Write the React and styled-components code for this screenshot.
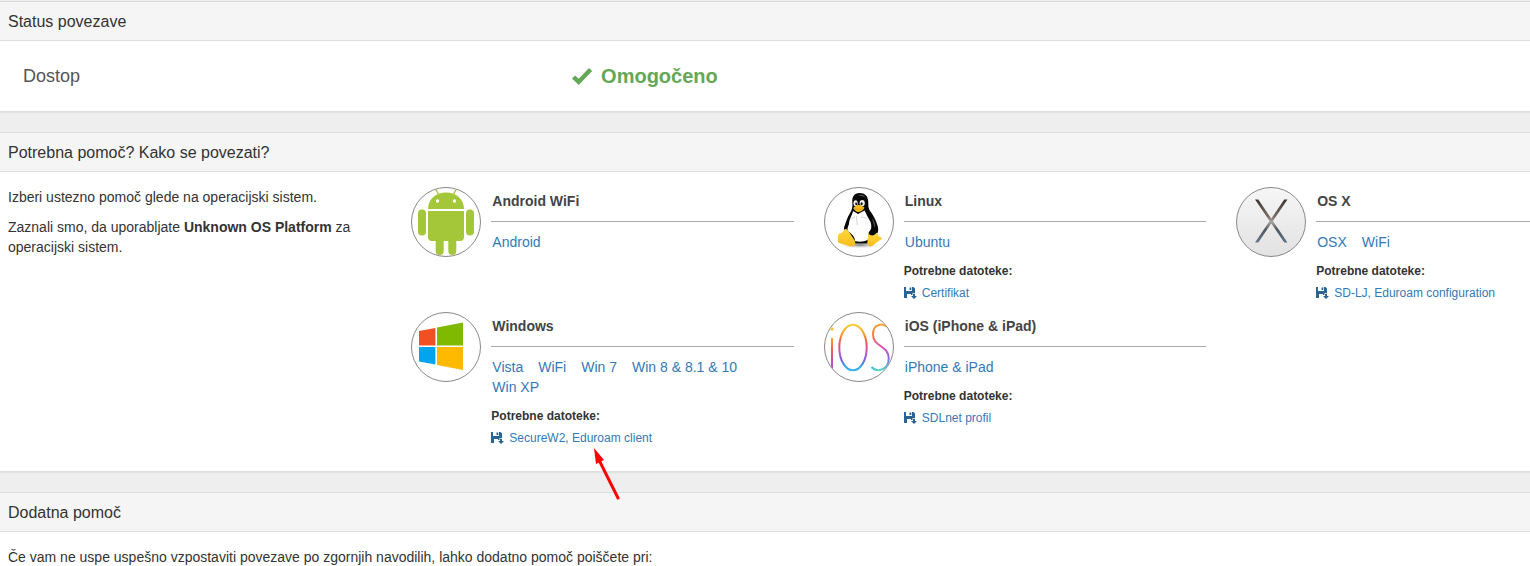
import React from "react";
import styled, { createGlobalStyle } from "styled-components";

const GlobalStyle = createGlobalStyle`
  * { box-sizing: border-box; }
  body {
    margin: 0;
    background: #eeeeee;
    color: #333333;
    font: 14px/20px "Liberation Sans", Arial, sans-serif;
  }
`;

const Page = styled.main`
  display: flex;
  flex-direction: column;
  gap: 20px;
  padding-top: 1px;
`;

const Panel = styled.section`
  background: #ffffff;
  border-top: 1px solid #dddddd;
  border-bottom: 1px solid #dddddd;
  box-shadow: 0 1px 1px rgba(0, 0, 0, 0.05);
`;

const PanelTitle = styled.h2`
  margin: 0;
  padding: 10px 8px 8px;
  background: #f5f5f5;
  border-bottom: 1px solid #dddddd;
  font-size: 16px;
  font-weight: 400;
  line-height: 20px;
`;

const StatusRow = styled.div`
  display: grid;
  grid-template-columns: 37% 1fr;
  align-items: center;
  padding: 25px 23px;
  color: #555555;
  font-size: 18px;
`;

const StatusValue = styled.strong`
  display: flex;
  align-items: center;
  gap: 9px;
  color: #64a857;
  font-size: 20px;
`;

const HelpBody = styled.div`
  display: flex;
  padding: 15px 0 14px 8px;
  overflow-x: clip;
`;

const Intro = styled.div`
  flex: 0 0 26.5%;
  padding-right: 40px;
`;

const Paragraph = styled.p`
  margin: 0 0 10px;
`;

const SystemGrid = styled.div`
  flex: 1;
  min-width: 0;
  display: grid;
  grid-template-columns: repeat(3, 36.87%);
`;

const SystemItem = styled.article`
  display: flex;
  gap: 10px;
  padding: 0 30px 9px 0;
`;

const Badge = styled.div`
  flex: none;
  width: 70px;
  height: 70px;
  border: 1px solid #888888;
  border-radius: 50%;
  overflow: hidden;
  background: ${(p) => p.$fill || "#ffffff"};

  svg {
    display: block;
    margin: -1px;
  }
`;

const SystemInfo = styled.div`
  flex: 1;
  min-width: 0;
`;

const SystemName = styled.h3`
  margin: 0 0 10px;
  padding: 4px 1px 10px;
  border-bottom: 1px solid #aaaaaa;
  color: #444444;
  font-size: 14px;
  line-height: 20px;
`;

const GuideLinks = styled.nav`
  display: flex;
  flex-wrap: wrap;
  column-gap: 15px;
  padding: 0 1px;
`;

const TextLink = styled.a`
  color: #337ab7;
  text-decoration: none;
  &:hover { text-decoration: underline; }
`;

const FilesTitle = styled.h4`
  margin: 9px 0 2px;
  font-size: 12px;
  line-height: 20px;
`;

const FileRow = styled.div`
  position: relative;
  font-size: 12px;
`;

const FileLink = styled(TextLink)`
  display: flex;
  align-items: center;
  gap: 5px;
`;

const Pointer = styled.svg`
  position: absolute;
  top: 19px;
  left: 101px;
  z-index: 1;
  pointer-events: none;
`;

const TextBody = styled.div`
  padding: 15px 8px;
`;

const CheckIcon = () => (
  <svg width="20" height="17" viewBox="0 0 20 17" aria-hidden="true">
    <path d="M0 10.5 3 7.5 6.7 10.8 17 0 20.2 3 6.7 17Z" fill="currentColor" />
  </svg>
);

const SaveIcon = () => (
  <svg width="13" height="12" viewBox="0 0 13 12" aria-hidden="true">
    <path
      fill="#2a6496"
      fillRule="evenodd"
      d="M0 0H2V4H8V0H9.5L11 1.5V6H8.5V8H7V7H3V11H0ZM5.5 .5H7.3V3H5.5ZM9 6.8H11V9H13L10 12 7 9H9Z"
    />
  </svg>
);

const AndroidArt = () => (
  <svg width="70" height="70" viewBox="0 0 70 70" aria-hidden="true">
    <g fill="#a4c639">
      <path d="M17 22C17 12 25 5.5 35 5.5S53 12 53 22Z" />
      <path d="M17 24H53V50Q53 54 49 54H21Q17 54 17 50Z" />
      <rect x="7" y="22.5" width="8" height="26" rx="4" />
      <rect x="55" y="22.5" width="8" height="26" rx="4" />
      <rect x="24.7" y="48" width="8" height="20" rx="4" />
      <rect x="37.3" y="48" width="8" height="20" rx="4" />
    </g>
    <path d="M24.5 2 28 8M45.5 2 42 8" stroke="#a4c639" strokeWidth="1.4" strokeLinecap="round" />
    <circle cx="26.5" cy="14" r="1.7" fill="#fff" />
    <circle cx="43.5" cy="14" r="1.7" fill="#fff" />
  </svg>
);

const LinuxArt = () => (
  <svg width="70" height="70" viewBox="0 0 70 70" aria-hidden="true">
    <defs>
      <radialGradient id="tuxShade">
        <stop offset="0" stopColor="#777" />
        <stop offset="1" stopColor="#fff" stopOpacity="0" />
      </radialGradient>
      <linearGradient id="tuxFoot" x1="0" y1="0" x2="0" y2="1">
        <stop offset="0" stopColor="#ffd83c" />
        <stop offset="1" stopColor="#f6bd1c" />
      </linearGradient>
    </defs>
    <ellipse cx="36" cy="58" rx="23" ry="4" fill="url(#tuxShade)" />
    <path
      fill="#080808"
      d="M35.5 6C30 6 28 10 28.3 15 28.6 20 28.5 22 25.5 27 23 31 22.5 34 20.5 39 19 43 21 48 25 52L31 56.5H44L49 51C54 48 55.5 43 53 37 51.5 32 49 28 46.5 24.5 43.8 21 44.6 18 44.2 14 43.8 9 41 6 35.5 6Z"
    />
    <path fill="#5a5a5a" d="M34 8C37 7.3 40 8 41 10 38 9 36 9 34 8ZM48 31C50.5 34 51.5 38 51 41 49.5 37 49 34 48 31Z" />
    <path
      fill="#fff"
      d="M29 24C28.5 28 25 32 25 37 23.5 41 22.5 43 25 45 28 47 31 50 31 54 35 55.3 40 55 44.2 52.5L44.8 45C48 43 48 37 45.5 33 43 29 42 26 40.5 23.5L34 27Z"
    />
    <path d="M32.5 29Q32.5 34 33.5 38M27 32Q29 30 31 30M37 30Q41 30 43 32" fill="none" stroke="#cfcfcf" strokeWidth=".9" />
    <ellipse cx="31.6" cy="16.2" rx="2.1" ry="2.9" fill="#eee" />
    <ellipse cx="38.2" cy="16.2" rx="2.6" ry="3.1" fill="#eee" />
    <ellipse cx="32.2" cy="16.8" rx="1" ry="1.4" fill="#111" />
    <ellipse cx="37.6" cy="16.8" rx="1.1" ry="1.5" fill="#111" />
    <path fill="#f5bd16" d="M29.2 21.2C30.5 19.5 32.5 18 34.7 18 37 18 38.5 19.7 40.4 20.4 40.4 22.6 36.5 24.8 34.2 25 32 25 30.5 23 29.2 21.2Z" />
    <path d="M30.5 21.7Q34.5 23.7 39.3 21.2" fill="none" stroke="#d08c12" strokeWidth=".6" />
    <path
      fill="url(#tuxFoot)"
      d="M14.7 46.4C17.5 46.5 18.7 45.5 20 43 21.5 40.8 24 43 25.7 46L31 54C32.2 57 29.5 60 26.7 59.5 23 58.3 19 57 15 56 12.8 55 14.6 52.6 14 50.3Z"
    />
    <path
      fill="url(#tuxFoot)"
      d="M44.5 46.5C46.5 49 50 49.3 52.5 45.7 53.5 46 53.6 49 55.5 49.6 57 50.3 58 51 57.7 52 54 54 51 57 48 59 45 60.2 43 58 43.3 55Z"
    />
  </svg>
);

const MacArt = () => (
  <svg width="70" height="70" viewBox="0 0 70 70" aria-hidden="true">
    <defs>
      <linearGradient id="macStroke" gradientUnits="userSpaceOnUse" x1="0" y1="12" x2="0" y2="56">
        <stop offset="0" stopColor="#3b3432" />
        <stop offset=".4" stopColor="#786b65" />
        <stop offset=".52" stopColor="#aaa39f" />
        <stop offset=".7" stopColor="#50565e" />
        <stop offset="1" stopColor="#66788c" />
      </linearGradient>
    </defs>
    <path d="M19 12.5H22.3L51.5 55.5H48.2ZM48.2 12.5H51.5L22.3 55.5H19Z" fill="url(#macStroke)" />
  </svg>
);

const WindowsArt = () => (
  <svg width="70" height="70" viewBox="0 0 70 70" aria-hidden="true">
    <path fill="#f25022" d="M8 19 24.4 16V33.4H8Z" />
    <path fill="#7fba00" d="M26 15.4 52 10.4V33.4H26Z" />
    <path fill="#00a4ef" d="M8 35H24.4V52.6L8 49.5Z" />
    <path fill="#ffb900" d="M26 35H52V58L26 53Z" />
  </svg>
);

const IosArt = () => (
  <svg width="70" height="70" viewBox="0 0 70 70" aria-hidden="true">
    <defs>
      <linearGradient id="iosStroke" gradientUnits="userSpaceOnUse" x1="0" y1="12" x2="0" y2="59">
        <stop offset="0" stopColor="#f8d43a" />
        <stop offset=".22" stopColor="#fb9a2c" />
        <stop offset=".4" stopColor="#f2555a" />
        <stop offset=".6" stopColor="#c44fd0" />
        <stop offset=".76" stopColor="#7b62e0" />
        <stop offset=".9" stopColor="#38a4ea" />
        <stop offset="1" stopColor="#3fb4e8" />
      </linearGradient>
      <linearGradient id="iosCurve" gradientUnits="userSpaceOnUse" x1="0" y1="12" x2="0" y2="59">
        <stop offset="0" stopColor="#fba42c" />
        <stop offset=".3" stopColor="#f5705a" />
        <stop offset=".5" stopColor="#d850c0" />
        <stop offset=".7" stopColor="#9a5fe0" />
        <stop offset=".86" stopColor="#45a8ea" />
        <stop offset="1" stopColor="#5bdcc0" />
      </linearGradient>
      <linearGradient id="iosStem" gradientUnits="userSpaceOnUse" x1="0" y1="26" x2="0" y2="57">
        <stop offset="0" stopColor="#fba42c" />
        <stop offset=".4" stopColor="#f2555a" />
        <stop offset="1" stopColor="#a04fe0" />
      </linearGradient>
    </defs>
    <g fill="none" strokeWidth="2">
      <ellipse cx="29" cy="35.5" rx="13.7" ry="22.8" stroke="url(#iosStroke)" />
      <path d="M63 15C59.5 11.5 49 10.5 49 22.5 49 35 64.7 33 64.7 46.5 64.7 59 52 60.5 47.5 55" stroke="url(#iosCurve)" />
    </g>
    <circle cx="8" cy="17" r="1.8" fill="#f8c93a" />
    <rect x="7" y="26" width="2" height="31" fill="url(#iosStem)" />
  </svg>
);

const systems = [
  { name: "Android WiFi", Art: AndroidArt, guides: ["Android"] },
  { name: "Linux", Art: LinuxArt, guides: ["Ubuntu"], file: "Certifikat" },
  {
    name: "OS X",
    Art: MacArt,
    fill: "linear-gradient(#f6f6f6, #e2e2e2)",
    guides: ["OSX", "WiFi"],
    file: "SD-LJ, Eduroam configuration",
  },
  {
    name: "Windows",
    Art: WindowsArt,
    guides: ["Vista", "WiFi", "Win 7", "Win 8 & 8.1 & 10", "Win XP"],
    file: "SecureW2, Eduroam client",
    pointed: true,
  },
  { name: "iOS (iPhone & iPad)", Art: IosArt, guides: ["iPhone & iPad"], file: "SDLnet profil" },
];

function System({ name, Art, fill, guides, file, pointed }) {
  return (
    <SystemItem>
      <Badge $fill={fill}>
        <Art />
      </Badge>
      <SystemInfo>
        <SystemName>{name}</SystemName>
        <GuideLinks aria-label={name}>
          {guides.map((guide) => (
            <TextLink href="#" key={guide}>{guide}</TextLink>
          ))}
        </GuideLinks>
        {file && (
          <>
            <FilesTitle>Potrebne datoteke:</FilesTitle>
            <FileRow>
              <FileLink href="#">
                <SaveIcon />
                {file}
              </FileLink>
              {pointed && (
                <Pointer width="28" height="54" viewBox="0 0 28 54" aria-hidden="true">
                  <path d="M7 13 26 51" stroke="#ff0000" strokeWidth="3" strokeLinecap="round" />
                  <path d="M2 1 12 13 4 17Z" fill="#ff0000" />
                </Pointer>
              )}
            </FileRow>
          </>
        )}
      </SystemInfo>
    </SystemItem>
  );
}

export default function App() {
  return (
    <>
      <GlobalStyle />
      <Page>
        <Panel>
          <PanelTitle>Status povezave</PanelTitle>
          <StatusRow>
            <span>Dostop</span>
            <StatusValue>
              <CheckIcon />
              Omogočeno
            </StatusValue>
          </StatusRow>
        </Panel>
        <Panel>
          <PanelTitle>Potrebna pomoč? Kako se povezati?</PanelTitle>
          <HelpBody>
            <Intro>
              <Paragraph>Izberi ustezno pomoč glede na operacijski sistem.</Paragraph>
              <Paragraph>
                Zaznali smo, da uporabljate <strong>Unknown OS Platform</strong> za operacijski sistem.
              </Paragraph>
            </Intro>
            <SystemGrid>
              {systems.map((system) => (
                <System key={system.name} {...system} />
              ))}
            </SystemGrid>
          </HelpBody>
        </Panel>
        <Panel>
          <PanelTitle>Dodatna pomoč</PanelTitle>
          <TextBody>
            Če vam ne uspe uspešno vzpostaviti povezave po zgornjih navodilih, lahko dodatno pomoč poiščete pri:
          </TextBody>
        </Panel>
      </Page>
    </>
  );
}
